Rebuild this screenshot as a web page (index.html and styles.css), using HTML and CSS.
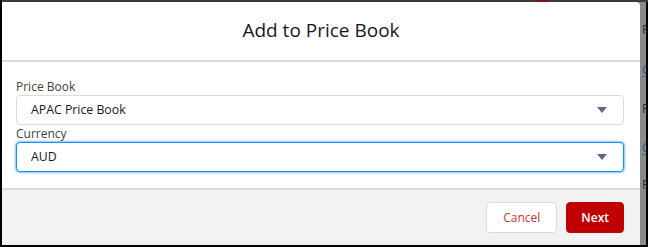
FILE: index.html
```html
<!DOCTYPE html>
<html lang="en">
<head>
<meta charset="utf-8">
<title>Add to Price Book</title>
<link rel="stylesheet" href="styles.css">
</head>
<body>
<div class="shot">
  <div class="topline"><span class="topmark"></span></div>
  <div class="stage">
    <div class="modal">
      <header class="modal-header">
        <h2 class="modal-title">Add to Price Book</h2>
      </header>
      <div class="modal-body">
        <div class="field">
          <label class="field-label">Price Book</label>
          <div class="select">
            <span class="select-value">APAC Price Book</span>
            <svg class="select-arrow" viewBox="0 0 10 6" width="10" height="6"><path d="M0 0h10L5 6z"/></svg>
          </div>
        </div>
        <div class="field">
          <label class="field-label">Currency</label>
          <div class="select select-focus">
            <span class="select-value">AUD</span>
            <svg class="select-arrow" viewBox="0 0 10 6" width="10" height="6"><path d="M0 0h10L5 6z"/></svg>
          </div>
        </div>
      </div>
      <footer class="modal-footer">
        <button class="btn btn-neutral">Cancel</button>
        <button class="btn btn-brand">Next</button>
      </footer>
    </div>
    <div class="peek">
      <span class="peek-p peek-1">P</span>
      <span class="peek-link peek-2">Ce</span>
      <span class="peek-p peek-3">P</span>
      <span class="peek-link peek-4">Ce</span>
      <span class="peek-p peek-5">P</span>
    </div>
  </div>
</div>
</body>
</html>
```

FILE: styles.css
```css
* { box-sizing: border-box; }

html, body {
  margin: 0;
  padding: 0;
  background: #000;
}

.shot {
  width: 648px;
  height: 247px;
  background: #000;
  padding: 0 2px 2px 2px;
  display: flex;
  flex-direction: column;
  font-family: "Open Sans", "Noto Sans", sans-serif;
  overflow: hidden;
}

.topline {
  height: 2px;
  background: #3a3a3a;
  margin: 0 -2px 0 0;
  display: flex;
}

.topmark {
  width: 12px;
  height: 2px;
  margin-left: 534px;
  background: #7a1414;
}

.stage {
  flex: 1;
  display: flex;
  background: #8a8a8a;
  min-height: 0;
}

.modal {
  width: 638px;
  display: flex;
  flex-direction: column;
  background: #fff;
  border-radius: 0 4px 0 0;
  overflow: hidden;
}

.modal-header {
  height: 60px;
  border-bottom: 2px solid #dddbda;
  display: flex;
  align-items: center;
  justify-content: center;
  padding-bottom: 2px;
}

.modal-title {
  margin: 0;
  font-size: 19px;
  font-weight: 400;
  color: #181818;
  line-height: 1.2;
}

.modal-body {
  padding: 16px 16px 16px 14px;
  background: #fff;
  border-bottom: 2px solid #dddbda;
}

.field-label {
  display: block;
  font-size: 12px;
  line-height: 17px;
  color: #3e3e3c;
}

.select {
  height: 30px;
  border: 1px solid #dddbda;
  border-radius: 4px;
  background: #fff;
  display: flex;
  align-items: center;
  justify-content: space-between;
  padding: 0 16px 0 14px;
}

.select-focus {
  border-color: #1b8cf2;
  box-shadow: 0 0 2px 1px rgba(27, 140, 242, 0.55);
}

.select-value {
  font-size: 12.3px;
  color: #181818;
  line-height: 1;
}

.select-arrow {
  fill: #5b6a86;
  display: block;
}

.modal-footer {
  flex: 1;
  background: #f2f2f2;
  display: flex;
  justify-content: flex-end;
  align-items: flex-start;
  gap: 9px;
  padding: 12px 16px 0 0;
}

.btn {
  height: 31px;
  border-radius: 4px;
  font-family: "Open Sans", "Noto Sans", sans-serif;
  font-size: 12px;
  padding: 0 16px;
  line-height: 29px;
  cursor: pointer;
}

.btn-neutral {
  background: #fff;
  border: 1px solid #dddbda;
  color: #c23934;
}

.btn-brand {
  background: #c00000;
  border: 1px solid #c00000;
  color: #fff;
  font-weight: 600;
  padding: 0 14px;
}

.peek {
  width: 6px;
  display: flex;
  flex-direction: column;
  overflow: hidden;
  white-space: nowrap;
  font-size: 12px;
  line-height: 12px;
  padding-left: 2px;
}

.peek-p { color: #2a2a2a; }
.peek-link {
  color: #1c5a9c;
  border-bottom: 1px dotted #1c5a9c;
  width: 10px;
}

.peek-1 { margin-top: 22px; }
.peek-2 { margin-top: 28px; }
.peek-3 { margin-top: 26px; }
.peek-4 { margin-top: 27px; }
.peek-5 { margin-top: 24px; }
```
